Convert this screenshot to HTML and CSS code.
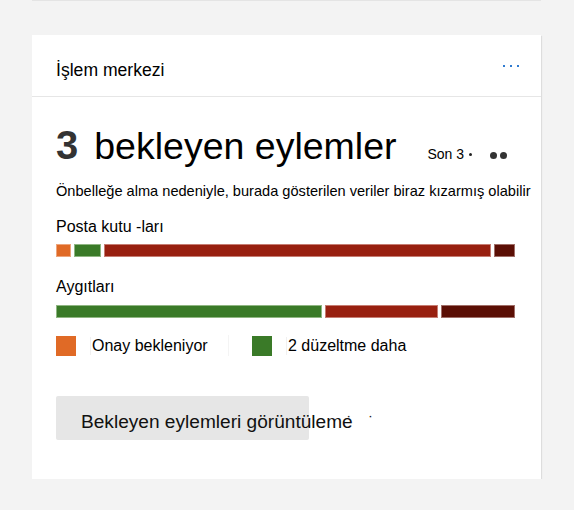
FILE: index.html
```html
<!DOCTYPE html>
<html>
<head>
    <title>İşlem merkezi</title>
    <link rel="stylesheet" href="styles.css">
</head>
<body>
    <div class="prev-card"></div>
    <div class="card">
        <div class="card-header">
            <span class="card-title">İşlem merkezi</span>
            <span class="more-btn"><i></i><i></i><i></i></span>
        </div>
        <div class="card-body">
            <div class="headline">
                <span class="count">3</span>
                <span class="count-label">bekleyen eylemler</span>
                <span class="period">Son 3<span class="dot-sm"></span></span>
                <span class="dot-lg"></span><span class="dot-lg"></span>
            </div>
            <div class="note">Önbelleğe alma nedeniyle, burada gösterilen veriler biraz kızarmış olabilir</div>

            <div class="group-label">Posta kutu -ları</div>
            <div class="bar">
                <span class="seg seg-orange" style="flex-basis: 15px"></span>
                <span class="seg seg-green" style="flex-basis: 27px"></span>
                <span class="seg seg-red" style="flex-basis: 387px"></span>
                <span class="seg seg-dark" style="flex-basis: 21px"></span>
            </div>

            <div class="group-label">Aygıtları</div>
            <div class="bar">
                <span class="seg seg-green" style="flex-basis: 266px"></span>
                <span class="seg seg-red" style="flex-basis: 113px"></span>
                <span class="seg seg-dark" style="flex-basis: 74px"></span>
            </div>

            <div class="legend">
                <div class="legend-item first">
                    <span class="swatch swatch-orange"></span>
                    <span class="legend-text">Onay bekleniyor</span>
                </div>
                <div class="legend-item">
                    <span class="swatch swatch-green"></span>
                    <span class="legend-text">2 düzeltme daha</span>
                </div>
            </div>

            <button class="view-btn">Bekleyen eylemleri görüntüleme<span class="trail">˙ ˙</span></button>
        </div>
    </div>
</body>
</html>
```

FILE: styles.css
```css
body {
    margin: 0;
    padding: 0 33px 0 32px;
    background: #f3f3f3;
    font-family: "Liberation Sans", Arial, sans-serif;
    color: #000;
}
.prev-card {
    height: 1px;
    background: #e4e4e4;
}
.card {
    margin-top: 34px;
    width: 509px;
    height: 444px;
    background: #fff;
    box-shadow: 1px 1px 1px rgba(0,0,0,0.09);
}
.card-header {
    display: flex;
    justify-content: space-between;
    align-items: flex-start;
    padding: 24px 22px 15px 24px;
    border-bottom: 1px solid #e6e6e6;
}
.card-title {
    font-size: 17.6px;
    line-height: 22px;
}
.more-btn {
    display: flex;
    gap: 5px;
    margin-top: 6px;
}
.more-btn i {
    width: 2px;
    height: 2px;
    background: #2f7bd0;
}
.card-body {
    padding: 0 25px 0 24px;
}
.headline {
    display: flex;
    align-items: baseline;
    margin-top: 26px;
    height: 44px;
}
.count {
    font-size: 40px;
    font-weight: bold;
    color: #333;
    line-height: 44px;
}
.count-label {
    font-size: 37.5px;
    line-height: 44px;
    margin-left: 16px;
}
.period {
    font-size: 14px;
    margin-left: 31px;
}
.dot-sm {
    display: inline-block;
    width: 3px;
    height: 3px;
    border-radius: 50%;
    background: #222;
    margin-left: 5px;
    vertical-align: 3px;
}
.dot-lg {
    display: inline-block;
    width: 7px;
    height: 7px;
    border-radius: 50%;
    background: #333;
    margin-left: 3px;
}
.period + .dot-lg {
    margin-left: 18px;
}
.note {
    font-size: 14.6px;
    line-height: 18px;
    margin-top: 15px;
    white-space: nowrap;
}
.group-label {
    font-size: 16px;
    line-height: 18px;
    margin-top: 18px;
}
.bar {
    display: flex;
    gap: 3px;
    width: 459px;
    margin-top: 8px;
}
.seg {
    height: 13px;
    box-sizing: border-box;
    border: 1px solid;
}
.seg-orange { background: #e06a26; border-color: #eda57c; }
.seg-green { background: #3a7a28; border-color: #8fb682; }
.seg-red { background: #982010; border-color: #c67c72; }
.seg-dark { background: #5b0f05; border-color: #a06e68; }
.bar + .group-label {
    margin-top: 21px;
}
.bar + .group-label + .bar {
    margin-top: 9px;
}
.legend {
    display: flex;
    margin-top: 17px;
    height: 21px;
}
.legend-item {
    display: flex;
    align-items: center;
}
.legend-item.first {
    width: 172px;
    border-right: 1px solid #f4f4f4;
    margin-right: 23px;
}
.swatch {
    width: 20px;
    height: 20px;
}
.swatch-orange { background: #e06a26; }
.swatch-green { background: #3a7a28; }
.legend-text {
    font-size: 16px;
    margin-left: 14px;
    padding-left: 1px;
    border-left: 1px solid #f0f0f0;
}
.view-btn {
    display: block;
    margin-top: 40px;
    width: 253px;
    height: 44px;
    padding: 8px 0 0 25px;
    border: none;
    border-radius: 2px;
    background: #e6e6e6;
    font-family: "Liberation Sans", Arial, sans-serif;
    font-size: 19.1px;
    color: #111;
    text-align: left;
    white-space: nowrap;
    overflow: visible;
}
.trail {
    font-size: 16px;
    margin-left: -6px;
    letter-spacing: 6px;
    color: #222;
}
```
